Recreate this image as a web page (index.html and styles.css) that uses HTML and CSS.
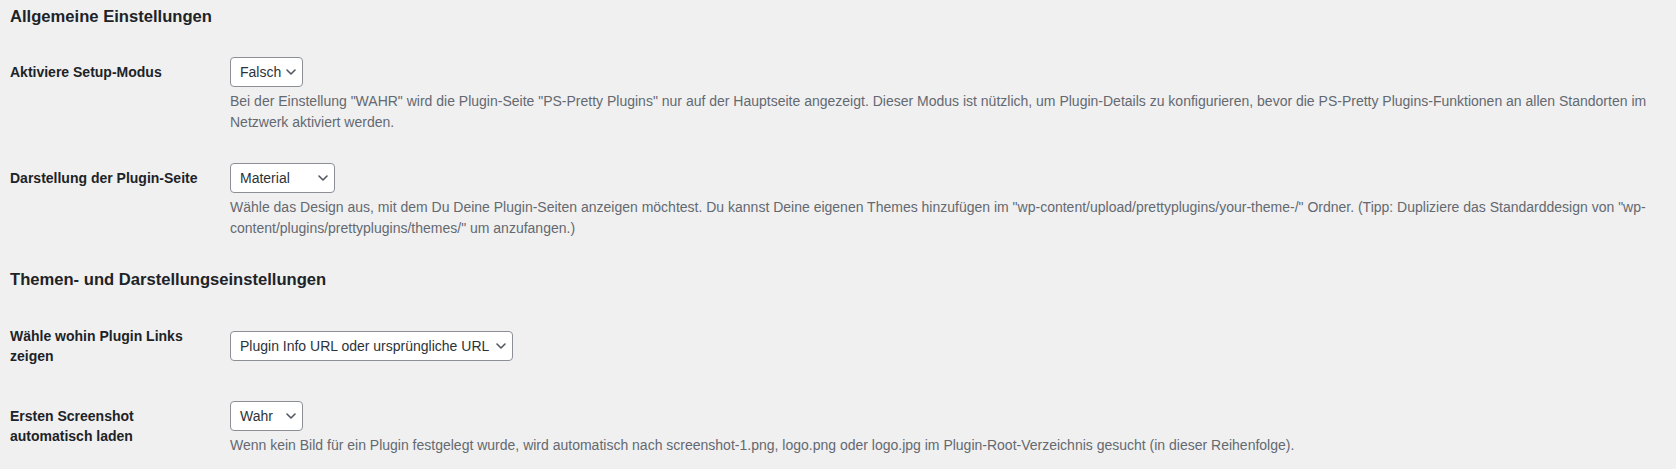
FILE: index.html
```html
<!DOCTYPE html>
<html lang="de">
<head>
    <meta charset="UTF-8">
    <meta name="viewport" content="width=device-width, initial-scale=1.0">
    <title>PS-Pretty Plugins Einstellungen</title>
    <link rel="stylesheet" href="styles.css">
</head>
<body>
    <div class="wrap">
        <h2 class="section-title">Allgemeine Einstellungen</h2>
        <table class="form-table">
            <tr>
                <th>Aktiviere Setup-Modus</th>
                <td>
                    <div class="select select-sm">
                        <span>Falsch</span>
                        <svg class="chevron" width="10" height="6" viewBox="0 0 10 6"><path d="M1 1l4 4 4-4" /></svg>
                    </div>
                    <p class="description">Bei der Einstellung "WAHR" wird die Plugin-Seite "PS-Pretty Plugins" nur auf der Hauptseite angezeigt. Dieser Modus ist nützlich, um Plugin-Details zu konfigurieren, bevor die PS-Pretty Plugins-Funktionen an allen Standorten im Netzwerk aktiviert werden.</p>
                </td>
            </tr>
            <tr>
                <th>Darstellung der Plugin-Seite</th>
                <td>
                    <div class="select select-md">
                        <span>Material</span>
                        <svg class="chevron" width="10" height="6" viewBox="0 0 10 6"><path d="M1 1l4 4 4-4" /></svg>
                    </div>
                    <p class="description">Wähle das Design aus, mit dem Du Deine Plugin-Seiten anzeigen möchtest. Du kannst Deine eigenen Themes hinzufügen im "wp-content/upload/prettyplugins/your-theme-/" Ordner. (Tipp: Dupliziere das Standarddesign von "wp-content/plugins/prettyplugins/themes/" um anzufangen.)</p>
                </td>
            </tr>
        </table>

        <h2 class="section-title">Themen- und Darstellungseinstellungen</h2>
        <table class="form-table">
            <tr>
                <th>Wähle wohin Plugin Links zeigen</th>
                <td>
                    <div class="select select-lg">
                        <span>Plugin Info URL oder ursprüngliche URL</span>
                        <svg class="chevron" width="10" height="6" viewBox="0 0 10 6"><path d="M1 1l4 4 4-4" /></svg>
                    </div>
                </td>
            </tr>
            <tr>
                <th>Ersten Screenshot automatisch laden</th>
                <td>
                    <div class="select select-sm">
                        <span>Wahr</span>
                        <svg class="chevron" width="10" height="6" viewBox="0 0 10 6"><path d="M1 1l4 4 4-4" /></svg>
                    </div>
                    <p class="description">Wenn kein Bild für ein Plugin festgelegt wurde, wird automatisch nach screenshot-1.png, logo.png oder logo.jpg im Plugin-Root-Verzeichnis gesucht (in dieser Reihenfolge).</p>
                </td>
            </tr>
        </table>
    </div>
</body>
</html>
```
FILE: styles.css
```css
* {
    box-sizing: border-box;
}
body {
    margin: 0;
    background-color: #f0f0f1;
    color: #1d2327;
    font-family: "Liberation Sans", Arial, sans-serif;
    font-size: 14px;
}
.wrap {
    padding: 0 10px;
}
.section-title {
    font-size: 16.6px;
    font-weight: bold;
    line-height: 24px;
    margin: 14px 0;
    color: #1d2327;
}
.section-title:first-child {
    margin: 5px 0 13px;
}
.form-table {
    width: 100%;
    border-collapse: collapse;
}
.form-table th {
    width: 210px;
    padding: 20px 10px 20px 0;
    text-align: left;
    vertical-align: top;
    font-weight: bold;
    line-height: 20px;
}
.form-table td {
    padding: 15px 10px;
    vertical-align: middle;
}
.select {
    display: flex;
    align-items: center;
    justify-content: space-between;
    gap: 4px;
    height: 30px;
    padding: 0 6px 0 9px;
    background-color: #fff;
    border: 1px solid #8c8f94;
    border-radius: 4px;
    color: #2c3338;
    line-height: 28px;
    white-space: nowrap;
}
.select-sm {
    width: 73px;
}
.select-md {
    width: 105px;
}
.select-lg {
    width: 283px;
}
.chevron {
    flex-shrink: 0;
}
.chevron path {
    fill: none;
    stroke: #50575e;
    stroke-width: 1.6;
    stroke-linecap: round;
    stroke-linejoin: round;
}
.description {
    margin: 4px 0 0;
    color: #646970;
    line-height: 21px;
}
```
